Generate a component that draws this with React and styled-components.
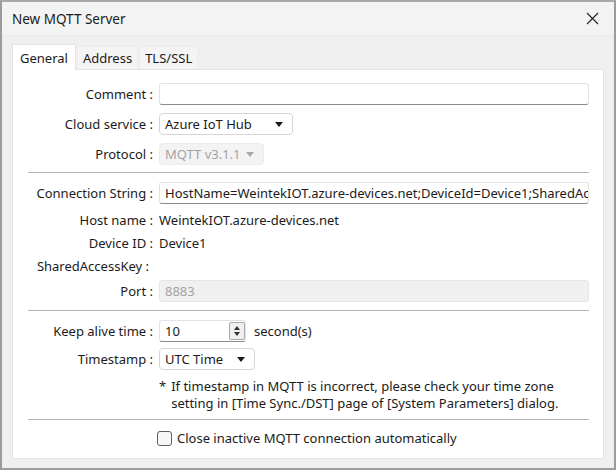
import React from "react"
import styled, { createGlobalStyle } from "styled-components"

const GlobalStyle = createGlobalStyle`
  html, body {
    margin: 0;
    padding: 0;
    background: #ffffff;
  }
  body {
    font-family: "Noto Sans", "Open Sans", sans-serif;
    font-size: 13px;
    color: #1b1b1b;
  }
`

const Window = styled.div`
  width: 616px;
  height: 470px;
  box-sizing: border-box;
  border: 2px solid #9c9c9c;
  border-top-color: #a8a8a8;
  background: #efefef;
  display: flex;
  flex-direction: column;
  overflow: hidden;
`

const TitleBar = styled.div`
  height: 33px;
  flex-shrink: 0;
  display: flex;
  align-items: center;
  justify-content: space-between;
  padding: 0 14px 0 10px;
  background: #f3f3f3;
  border-bottom: 1px solid #ebebeb;
  font-size: 13.5px;
`

const CloseButton = styled.span`
  display: flex;
  width: 16px;
  height: 16px;
  align-items: center;
  justify-content: center;
`

const TabStrip = styled.div`
  display: flex;
  align-items: flex-end;
  height: 33px;
  flex-shrink: 0;
  padding-left: 10px;
  gap: 1px;
`

const Tab = styled.div`
  height: ${(p) => (p.$active ? "25px" : "22px")};
  padding: 0 ${(p) => (p.$active ? "7px" : "5px")};
  display: flex;
  align-items: center;
  background: ${(p) => (p.$active ? "#ffffff" : "#f4f4f4")};
  border: 1px solid ${(p) => (p.$active ? "#e2e2e2" : "#ececec")};
  border-bottom: none;
  font-size: 13px;
  ${(p) => p.$active && "margin-bottom: -1px; position: relative; z-index: 1;"}
`

const Panel = styled.div`
  flex: 1;
  margin: 0 10px 9px 10px;
  background: #ffffff;
  border: 1px solid #e4e4e4;
  padding: 13px 14px 0 15px;
  display: flex;
  flex-direction: column;
`

const Row = styled.div`
  display: flex;
  align-items: center;
  height: ${(p) => p.$h || 22}px;
  margin-top: ${(p) => p.$mt || 0}px;
  flex-shrink: 0;
`

const Label = styled.div`
  width: 125px;
  flex-shrink: 0;
  text-align: right;
  white-space: nowrap;
  padding-right: ${(p) => p.$pr || 0}px;
  box-sizing: border-box;
`

const Field = styled.div`
  flex: 1;
  display: flex;
  align-items: center;
  gap: 8px;
  padding-left: 6px;
  min-width: 0;
`

const TextBox = styled.div`
  box-sizing: border-box;
  width: ${(p) => (p.$w ? `${p.$w}px` : "100%")};
  height: 22px;
  padding: 0 5px;
  display: flex;
  align-items: center;
  background: ${(p) => (p.$disabled ? "#f0f0f0" : "#ffffff")};
  color: ${(p) => (p.$disabled ? "#a3a3a3" : "#1b1b1b")};
  border: 1px solid ${(p) => (p.$disabled ? "#e6e6e6" : "#e3e3e3")};
  border-bottom-color: ${(p) => (p.$disabled ? "#e6e6e6" : "#8c8c8c")};
  border-radius: 3px;
  white-space: nowrap;
  overflow: hidden;
  position: relative;
`

const Select = styled.div`
  box-sizing: border-box;
  width: ${(p) => p.$w}px;
  height: 22px;
  padding: 0 9px 0 5px;
  display: flex;
  align-items: center;
  justify-content: space-between;
  background: ${(p) => (p.$disabled ? "#f3f3f3" : "#ffffff")};
  color: ${(p) => (p.$disabled ? "#a3a3a3" : "#1b1b1b")};
  border: 1px solid ${(p) => (p.$disabled ? "#ececec" : "#d6d6d6")};
  border-radius: 4px;
  white-space: nowrap;
`

const Arrow = styled.span`
  width: 0;
  height: 0;
  border-left: 4px solid transparent;
  border-right: 4px solid transparent;
  border-top: 5px solid ${(p) => (p.$disabled ? "#a8a8a8" : "#1b1b1b")};
`

const Spinner = styled.div`
  position: absolute;
  right: 0;
  top: 1px;
  width: 16px;
  height: 18px;
  box-sizing: border-box;
  border: 1px solid #a9a9a9;
  border-radius: 2px;
  background: #efefef;
  display: flex;
  flex-direction: column;
  align-items: center;
  justify-content: space-evenly;
`

const SpinArrow = styled.span`
  width: 0;
  height: 0;
  border-left: 3px solid transparent;
  border-right: 3px solid transparent;
  ${(p) => (p.$up ? "border-bottom: 4px solid #333;" : "border-top: 4px solid #333;")}
`

const Separator = styled.div`
  height: 1px;
  background: #b4b4b4;
  margin-top: ${(p) => p.$mt}px;
  flex-shrink: 0;
`

const Note = styled.div`
  margin: ${(p) => p.$mt}px 0 0 131px;
  display: flex;
  gap: 5px;
  line-height: 17px;
  font-size: 13px;
`

const Checkbox = styled.span`
  width: 13px;
  height: 13px;
  border: 1px solid #5f5f5f;
  border-radius: 3px;
  background: #f7f7f7;
  flex-shrink: 0;
`

const CheckLabel = styled.label`
  display: flex;
  align-items: center;
  gap: 5px;
  padding-left: 129px;
`

const FormRow = ({ label, children, mt, h, pr }) => (
  <Row $mt={mt} $h={h}>
    <Label $pr={pr}>{label}</Label>
    <Field>{children}</Field>
  </Row>
)

export default function App() {
  return (
    <>
      <GlobalStyle />
      <Window>
        <TitleBar>
          <span>New MQTT Server</span>
          <CloseButton>
            <svg width="13" height="13" viewBox="0 0 13 13">
              <path d="M1 1 L12 12 M12 1 L1 12" stroke="#222" strokeWidth="1.1" />
            </svg>
          </CloseButton>
        </TitleBar>
        <TabStrip>
          <Tab $active>General</Tab>
          <Tab>Address</Tab>
          <Tab>TLS/SSL</Tab>
        </TabStrip>
        <Panel>
          <FormRow label="Comment :">
            <TextBox />
          </FormRow>
          <FormRow label="Cloud service :" mt={8}>
            <Select $w={134}>
              Azure IoT Hub <Arrow />
            </Select>
          </FormRow>
          <FormRow label="Protocol :" mt={8}>
            <Select $w={105} $disabled>
              MQTT v3.1.1 <Arrow $disabled />
            </Select>
          </FormRow>
          <Separator $mt={7} />
          <FormRow label="Connection String :" mt={9}>
            <TextBox>
              HostName=WeintekIOT.azure-devices.net;DeviceId=Device1;SharedAccessKey=
            </TextBox>
          </FormRow>
          <FormRow label="Host name :" mt={4} h={23}>
            WeintekIOT.azure-devices.net
          </FormRow>
          <FormRow label="Device ID :" h={23}>
            Device1
          </FormRow>
          <FormRow label="SharedAccessKey :" h={23} pr={4} />
          <FormRow label="Port :" mt={3}>
            <TextBox $disabled>8883</TextBox>
          </FormRow>
          <Separator $mt={8} />
          <FormRow label="Keep alive time :" mt={9}>
            <TextBox $w={87}>
              10
              <Spinner>
                <SpinArrow $up />
                <SpinArrow />
              </Spinner>
            </TextBox>
            <span>second(s)</span>
          </FormRow>
          <FormRow label="Timestamp :" mt={6}>
            <Select $w={96}>
              UTC Time <Arrow />
            </Select>
          </FormRow>
          <Note $mt={8}>
            <span>*</span>
            <span>
              If timestamp in MQTT is incorrect, please check your time zone
              <br />
              setting in [Time Sync./DST] page of [System Parameters] dialog.
            </span>
          </Note>
          <Separator $mt={7} />
          <Row $mt={7}>
            <CheckLabel>
              <Checkbox />
              Close inactive MQTT connection automatically
            </CheckLabel>
          </Row>
        </Panel>
      </Window>
    </>
  )
}
